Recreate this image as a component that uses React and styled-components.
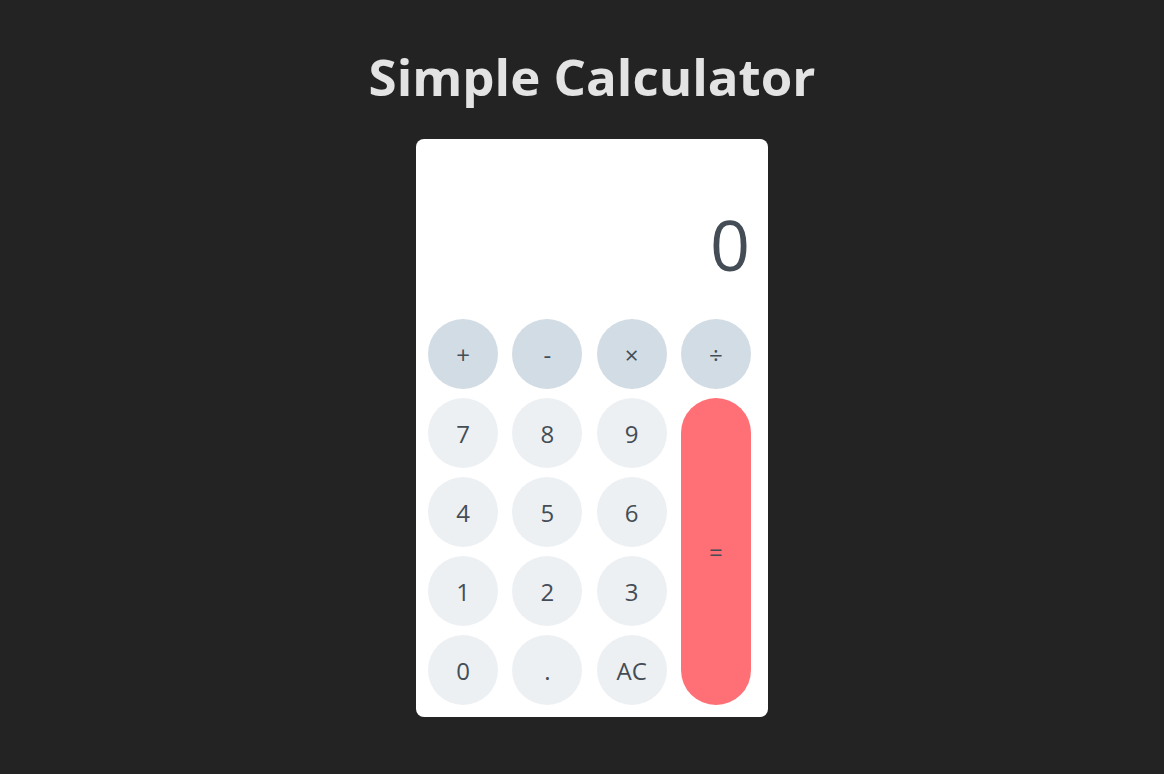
import React from "react";
import styled, { createGlobalStyle } from "styled-components";

const GlobalStyle = createGlobalStyle`
  html, body {
    margin: 0;
    padding: 0;
    background: #232323;
    font-family: "Open Sans", "Noto Sans", sans-serif;
  }
`;

const keys = [
  { label: "+", kind: "op" },
  { label: "-", kind: "op" },
  { label: "×", kind: "op" },
  { label: "÷", kind: "op" },
  { label: "7" },
  { label: "8" },
  { label: "9" },
  { label: "=", kind: "equals" },
  { label: "4" },
  { label: "5" },
  { label: "6" },
  { label: "1" },
  { label: "2" },
  { label: "3" },
  { label: "0" },
  { label: "." },
  { label: "AC" },
];

const App = () => {
  return (
    <Page>
      <GlobalStyle />
      <Title>Simple Calculator</Title>
      <Calculator>
        <Display>0</Display>
        <Keypad>
          {keys.map((k) => (
            <Key key={k.label} $kind={k.kind}>
              {k.label}
            </Key>
          ))}
        </Keypad>
      </Calculator>
    </Page>
  );
};

const Page = styled.div`
  min-height: 100vh;
  box-sizing: border-box;
  padding-left: 20px;
  display: flex;
  flex-direction: column;
  align-items: center;
`;

const Title = styled.h1`
  margin: 41px 0 27px;
  font-size: 51px;
  line-height: 71px;
  font-weight: 700;
  color: #e3e3e3;
`;

const Calculator = styled.div`
  width: 352px;
  box-sizing: border-box;
  background: #ffffff;
  border-radius: 8px;
  padding: 0 17px 12px 12px;
`;

const Display = styled.div`
  height: 180px;
  display: flex;
  align-items: center;
  justify-content: flex-end;
  padding: 30px 1px 0 0;
  box-sizing: border-box;
  font-size: 70px;
  color: #444d56;
`;

const Keypad = styled.div`
  display: grid;
  grid-template-columns: repeat(4, 70px);
  grid-auto-rows: 70px;
  column-gap: 14.33px;
  row-gap: 9px;
`;

const Key = styled.button`
  border: none;
  border-radius: 35px;
  font-family: "Open Sans", "Noto Sans", sans-serif;
  font-size: 24px;
  color: #444d56;
  cursor: pointer;
  background: ${(p) =>
    p.$kind === "op" ? "#d2dce4" : p.$kind === "equals" ? "#ff7076" : "#edf0f3"};
  ${(p) =>
    p.$kind === "equals" &&
    `
    grid-column: 4;
    grid-row: 2 / span 4;
  `}
`;

export default App;
